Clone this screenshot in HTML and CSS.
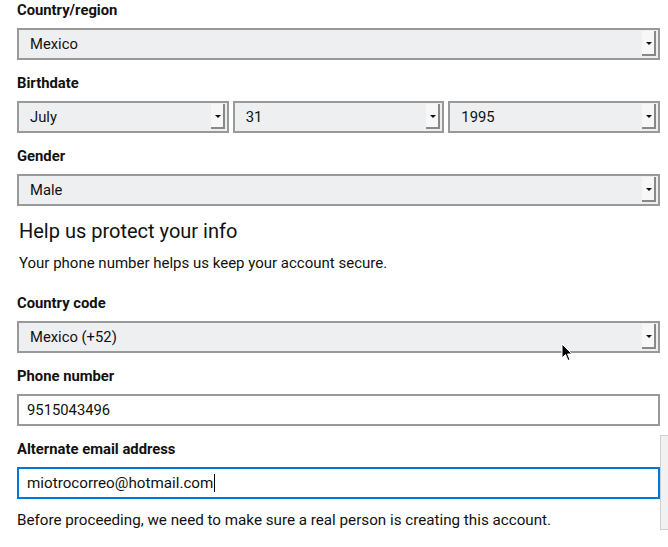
FILE: index.html
```html
<!DOCTYPE html>
<html>
<head>
<meta charset="utf-8">
<link rel="stylesheet" href="styles.css">
</head>
<body>
<div class="form">
  <div class="field">
    <div class="label">Country/region</div>
    <div class="select"><span>Mexico</span><div class="arrow"></div></div>
  </div>
  <div class="field">
    <div class="label">Birthdate</div>
    <div class="row">
      <div class="select"><span>July</span><div class="arrow"></div></div>
      <div class="select"><span>31</span><div class="arrow"></div></div>
      <div class="select"><span>1995</span><div class="arrow"></div></div>
    </div>
  </div>
  <div class="field">
    <div class="label">Gender</div>
    <div class="select"><span>Male</span><div class="arrow"></div></div>
  </div>
  <h2 class="heading">Help us protect your info</h2>
  <p class="desc">Your phone number helps us keep your account secure.</p>
  <div class="field">
    <div class="label">Country code</div>
    <div class="select"><span>Mexico (+52)</span><div class="arrow"></div></div>
  </div>
  <div class="field">
    <div class="label">Phone number</div>
    <div class="input"><span>9515043496</span></div>
  </div>
  <div class="field last">
    <div class="label">Alternate email address</div>
    <div class="input focused"><span>miotrocorreo@hotmail.com</span><span class="caret"></span></div>
  </div>
  <p class="desc final">Before proceeding, we need to make sure a real person is creating this account.</p>
</div>
<div class="scrollpiece"></div>
<svg class="pointer" width="14" height="20" viewBox="0 0 14 20"><path d="M1 1 L1 15 L4.5 11.5 L7 17.5 L9 16.6 L6.6 11 L11 11 Z" fill="#000" stroke="#fff" stroke-width="1"/></svg>
</body>
</html>
```
FILE: styles.css
```css
html, body {
  margin: 0;
  padding: 0;
  background: #fff;
}
body {
  font-family: Roboto, "Noto Sans", sans-serif;
  color: #000;
  width: 668px;
  height: 547px;
  overflow: hidden;
  position: relative;
}
.form {
  padding: 1px 8px 0 17px;
  width: 643px;
}
.field {
  display: flex;
  flex-direction: column;
  margin-bottom: 14px;
}
.field.last {
  margin-bottom: 12px;
}
.label {
  font-size: 14.8px;
  font-weight: bold;
  line-height: 18px;
  margin-bottom: 9px;
  color: #111;
}
.row {
  display: flex;
  gap: 4px;
}
.row .select {
  flex: 1;
}
.select {
  box-sizing: border-box;
  height: 32px;
  border: 2px solid #999;
  background: #eeeff0;
  display: flex;
  align-items: center;
  padding-left: 11px;
  padding-right: 2px;
  font-size: 14.8px;
  color: #111;
}
.select span {
  flex: 1;
}
.arrow {
  align-self: stretch;
  width: 12px;
  margin: 1px 0 2px;
  background: #f7f7f7;
  border-right: 2px solid #888;
  border-bottom: 2px solid #888;
  position: relative;
}
.arrow::after {
  content: "";
  position: absolute;
  left: 4px;
  top: 11px;
  border-left: 3px solid transparent;
  border-right: 3px solid transparent;
  border-top: 3px solid #111;
}
.input {
  box-sizing: border-box;
  height: 32px;
  border: 2px solid #999;
  background: #fff;
  display: flex;
  align-items: center;
  padding-left: 8px;
  font-size: 14.8px;
  color: #111;
}
.input.focused {
  border-color: #0078d7;
  font-size: 15.2px;
}
.caret {
  display: inline-block;
  width: 1px;
  height: 18px;
  background: #000;
  margin-left: 1px;
}
.heading {
  font-size: 20px;
  font-weight: normal;
  margin: -1px 0 0 2px;
  line-height: 24px;
  color: #111;
}
.desc {
  font-size: 15px;
  margin: 11px 0 22px 2px;
  line-height: 18px;
  color: #111;
}
.desc.final {
  margin: 0;
  font-size: 15.2px;
}
.scrollpiece {
  position: absolute;
  left: 660px;
  top: 435px;
  width: 7px;
  height: 93px;
  background: #f1f1f1;
  border: 1px solid #cfcfcf;
  border-right: none;
}
.pointer {
  position: absolute;
  left: 561px;
  top: 343px;
}
```
